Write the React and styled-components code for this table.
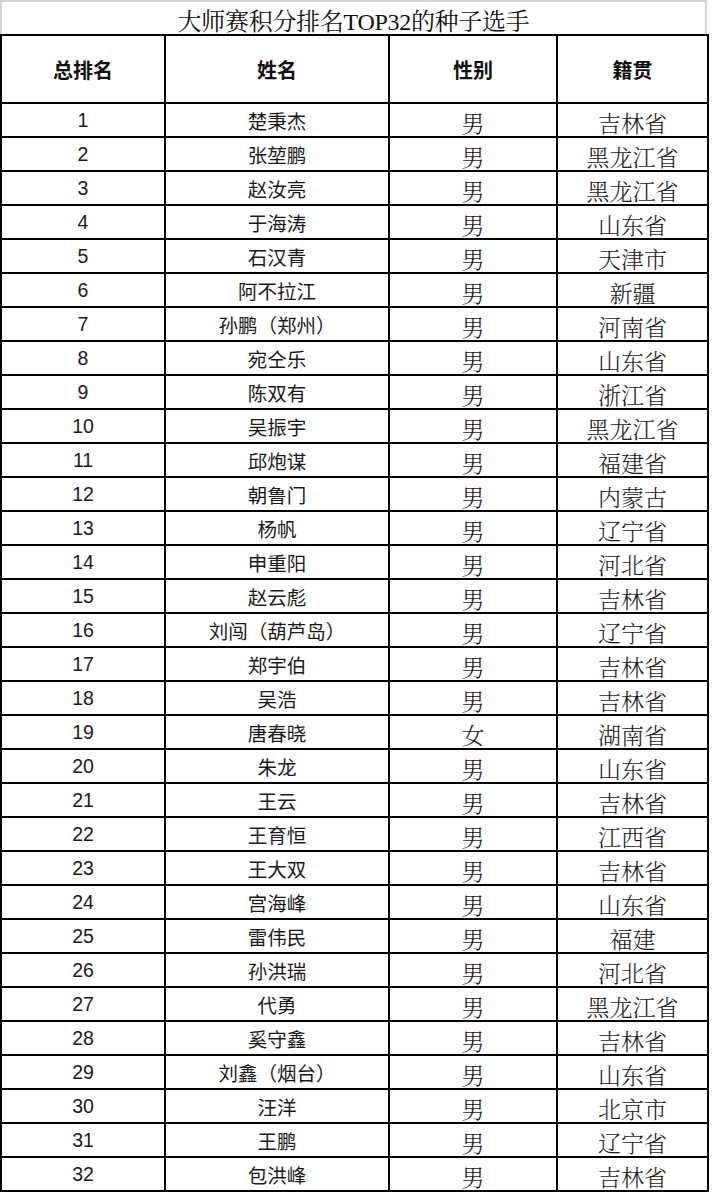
import React from "react";
import styled, { createGlobalStyle } from "styled-components";

const Global = createGlobalStyle`
  html, body { margin: 0; padding: 0; background: #fff; }
  body { width: 712px; }
`;

const Page = styled.div`
  width: 712px;
  background: #fff;
`;

const Title = styled.div`
  box-sizing: border-box;
  width: 707px;
  height: 34px;
  border-top: 2px solid #d4d4d4;
  border-left: 2px solid #d4d4d4;
  border-right: 2px solid #d4d4d4;
  display: flex;
  align-items: center;
  justify-content: center;
  padding-top: 2px;
  font-family: "Liberation Serif", "Noto Serif CJK SC", "Noto Sans CJK SC", serif;
  font-size: 24px;
  color: #111;
  letter-spacing: -0.3px;
`;

const Grid = styled.div`
  width: 709px;
  box-sizing: border-box;
  display: grid;
  grid-template-columns: 162px 222px 166px 149px;
  grid-template-rows: 66px;
  grid-auto-rows: 32px;
  gap: 2px;
  padding: 2px;
  background: #000;
`;

const HeadCell = styled.div`
  background: #fff;
  display: flex;
  align-items: center;
  justify-content: center;
  font-family: "Liberation Sans", "Noto Sans CJK SC", sans-serif;
  font-weight: 700;
  font-size: 20px;
  color: #111;
`;

const Cell = styled.div`
  background: #fff;
  display: flex;
  align-items: center;
  justify-content: center;
  color: #1a1a1a;
  box-sizing: border-box;
  ${(p) =>
    p.$serif
      ? `
    font-family: "Liberation Serif", "Noto Serif CJK SC", "Noto Sans CJK SC", serif;
    font-size: 23px;
    padding-top: 5px;
    font-weight: 300;
  `
      : `
    font-family: "Liberation Sans", "Noto Sans CJK SC", sans-serif;
    font-size: 19.5px;
    padding-top: 0px;
  `}
`;

const rows = [
  ["楚秉杰", "男", "吉林省"],
  ["张堃鹏", "男", "黑龙江省"],
  ["赵汝亮", "男", "黑龙江省"],
  ["于海涛", "男", "山东省"],
  ["石汉青", "男", "天津市"],
  ["阿不拉江", "男", "新疆"],
  ["孙鹏（郑州）", "男", "河南省"],
  ["宛仝乐", "男", "山东省"],
  ["陈双有", "男", "浙江省"],
  ["吴振宇", "男", "黑龙江省"],
  ["邱炮谋", "男", "福建省"],
  ["朝鲁门", "男", "内蒙古"],
  ["杨帆", "男", "辽宁省"],
  ["申重阳", "男", "河北省"],
  ["赵云彪", "男", "吉林省"],
  ["刘闯（葫芦岛）", "男", "辽宁省"],
  ["郑宇伯", "男", "吉林省"],
  ["吴浩", "男", "吉林省"],
  ["唐春晓", "女", "湖南省"],
  ["朱龙", "男", "山东省"],
  ["王云", "男", "吉林省"],
  ["王育恒", "男", "江西省"],
  ["王大双", "男", "吉林省"],
  ["宫海峰", "男", "山东省"],
  ["雷伟民", "男", "福建"],
  ["孙洪瑞", "男", "河北省"],
  ["代勇", "男", "黑龙江省"],
  ["奚守鑫", "男", "吉林省"],
  ["刘鑫（烟台）", "男", "山东省"],
  ["汪洋", "男", "北京市"],
  ["王鹏", "男", "辽宁省"],
  ["包洪峰", "男", "吉林省"],
];

export default function App() {
  return (
    <Page>
      <Global />
      <Title>大师赛积分排名TOP32的种子选手</Title>
      <Grid>
        <HeadCell>总排名</HeadCell>
        <HeadCell>姓名</HeadCell>
        <HeadCell>性别</HeadCell>
        <HeadCell>籍贯</HeadCell>
        {rows.map(([name, sex, place], i) => (
          <React.Fragment key={i}>
            <Cell>{i + 1}</Cell>
            <Cell>{name}</Cell>
            <Cell $serif>{sex}</Cell>
            <Cell $serif>{place}</Cell>
          </React.Fragment>
        ))}
      </Grid>
    </Page>
  );
}
